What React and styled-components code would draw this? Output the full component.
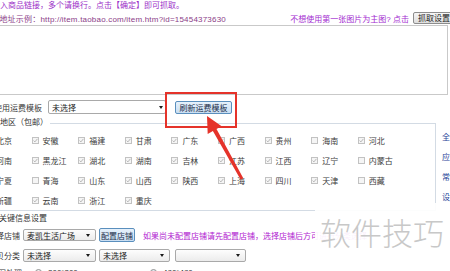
import React from 'react'
import styled, { createGlobalStyle } from 'styled-components'

const regions = [
  ['北京', 1], ['安徽', 1], ['福建', 1], ['甘肃', 1], ['广东', 1], ['广西', 1], ['贵州', 1], ['海南', 0], ['河北', 1],
  ['河南', 1], ['黑龙江', 1], ['湖北', 1], ['湖南', 1], ['吉林', 1], ['江苏', 1], ['江西', 1], ['辽宁', 1], ['内蒙古', 0],
  ['宁夏', 1], ['青海', 0], ['山东', 1], ['山西', 1], ['陕西', 1], ['上海', 1], ['四川', 1], ['天津', 1], ['西藏', 0],
  ['新疆', 1], ['云南', 1], ['浙江', 1], ['重庆', 1],
]

const links = ['全部选择', '应用到全部', '常用地区', '设置']

export default function App() {
  return (
    <>
      <GlobalStyle />
      <Page>
        <Sheet>
          <TopNote>请输入商品链接，多个请换行。点击【确定】即可抓取。</TopNote>
          <ExampleRow>
            <Example>宝贝地址示例：http://item.taobao.com/item.htm?id=15454373630</Example>
            <Hint>不想使用第一张图片为主图? 点击</Hint>
            <GrayButton>抓取设置</GrayButton>
          </ExampleRow>
          <UrlBox />

          <FormRow $top={5}>
            <Label $w={72} $gap={6}>使用运费模板</Label>
            <Select $w={118} $h={14} $arrow={2} $plain>未选择</Select>
            <BlueButton $w={57} $h={13} $ml={9}>刷新运费模板</BlueButton>
          </FormRow>

          <RegionRow>
            <Region>
              <Legend>指定地区（包邮）</Legend>
              <Grid>
                {regions.map(([name, on]) => (
                  <Item key={name}>
                    <Box>
                      {on ? (
                        <svg width="5" height="5" viewBox="0 0 5 5">
                          <path d="M0.6 2.6 L1.9 3.9 L4.4 0.9" stroke="#b0b0b0" strokeWidth="0.9" fill="none" />
                        </svg>
                      ) : null}
                    </Box>
                    {name}
                  </Item>
                ))}
              </Grid>
            </Region>
            <LinkCol>
              {links.map((l) => (
                <SideLink key={l}>{l}</SideLink>
              ))}
            </LinkCol>
          </RegionRow>

          <SectionTitle>关键信息设置</SectionTitle>

          <FormRow $top={4}>
            <Label $w={50} $gap={3}>选择店铺</Label>
            <Select $w={73} $h={12} $arrow={5}>麦凯生活广场</Select>
            <BlueButton $w={36} $h={14} $ml={3}>配置店铺</BlueButton>
            <StoreNote>如果尚未配置店铺请先配置店铺，选择店铺后方可进行分类选择</StoreNote>
          </FormRow>

          <FormRow $top={6}>
            <Label $w={50} $gap={3}>宝贝分类</Label>
            <Select $w={73} $h={13} $arrow={5}>未选择</Select>
            <Select $w={71} $h={13} $arrow={5} $ml={3}>未选择</Select>
            <Select $w={71} $h={13} $arrow={5} $ml={5}></Select>
          </FormRow>

          <FormRow $top={3}>
            <Label $w={52} $gap={13}>主图处理</Label>
            <RadioOption $w={115}>
              <Radio />200*200
            </RadioOption>
            <RadioOption $w={80}>
              <Radio $on />480*480
            </RadioOption>
          </FormRow>
        </Sheet>

        <Marks width="450" height="271" viewBox="0 0 450 271">
          <rect x="166" y="93" width="70" height="34" fill="none" stroke="#e5332a" strokeWidth="2" />
          <polygon
            points="207,116 221.7,126.3 216.5,129.1 243.3,178.3 240.7,179.7 212.9,131.1 207.7,133.9"
            fill="#e5332a"
          />
        </Marks>

        <Watermark>软件技巧</Watermark>
      </Page>
    </>
  )
}

const GlobalStyle = createGlobalStyle`
    html, body {
        margin: 0;
        padding: 0;
        background: #fff;
        overflow: hidden;
    }`
const Page = styled.div`
    position: relative;
    width: 450px;
    height: 271px;
    overflow: hidden;
    font-family: "Liberation Sans", "Noto Sans CJK SC", sans-serif;
    font-size: 8px;
    color: #3a3a3a;`
const Sheet = styled.div`
    margin-left: -30px;
    width: 540px;
    display: flex;
    flex-direction: column;`
const TopNote = styled.div`
    height: 11px;
    line-height: 11px;
    padding-left: 14px;
    color: #9b30c8;
    white-space: nowrap;`
const ExampleRow = styled.div`
    display: flex;
    align-items: center;
    width: 485px;
    height: 14px;
    white-space: nowrap;`
const Example = styled.span`
    padding-left: 13px;
    letter-spacing: 0.2px;
    color: #8b3d87;`
const Hint = styled.span`
    margin-left: auto;
    color: #a32ad0;`
const GrayButton = styled.span`
    margin-left: 4px;
    height: 12px;
    line-height: 11px;
    padding: 0 4px;
    box-sizing: border-box;
    border: 1px solid #8d8d8d;
    border-radius: 2px;
    background: linear-gradient(#f6f6f6, #dedede);
    color: #222;`
const UrlBox = styled.div`
    margin-left: 8px;
    width: 470px;
    height: 70px;
    box-sizing: border-box;
    border: 1px solid #c9c9c9;
    background: #fff;`
const FormRow = styled.div`
    display: flex;
    align-items: center;
    height: 14px;
    margin-top: ${(p) => p.$top}px;
    white-space: nowrap;`
const Label = styled.span`
    flex: none;
    width: ${(p) => p.$w}px;
    margin-right: ${(p) => p.$gap}px;
    text-align: right;
    overflow: hidden;`
const SelectBox = styled.span`
    flex: none;
    display: flex;
    align-items: center;
    width: ${(p) => p.$w}px;
    height: ${(p) => p.$h}px;
    margin-left: ${(p) => p.$ml || 0}px;
    padding-left: 3px;
    box-sizing: border-box;
    border: 1px solid #a9a9a9;
    border-radius: 2px;
    background: ${(p) => (p.$plain ? '#fff' : 'linear-gradient(#fdfdfd, #ececec)')};
    color: #222;`
const Arrow = styled.span`
    margin-left: auto;
    margin-right: ${(p) => p.$r}px;
    width: 0;
    height: 0;
    border-left: 2.5px solid transparent;
    border-right: 2.5px solid transparent;
    border-top: 3px solid #1a1a1a;`
function Select({ children, $arrow, ...rest }) {
  return (
    <SelectBox {...rest}>
      {children}
      <Arrow $r={$arrow} />
    </SelectBox>
  )
}
const BlueButton = styled.span`
    flex: none;
    width: ${(p) => p.$w}px;
    height: ${(p) => p.$h}px;
    margin-left: ${(p) => p.$ml}px;
    box-sizing: border-box;
    border: 1px solid #5a8fbd;
    border-radius: 2px;
    background: linear-gradient(#e6f1fb, #c9def2);
    color: #1d2f4a;
    display: flex;
    align-items: center;
    justify-content: center;`
const RegionRow = styled.div`
    display: flex;
    margin-top: 3px;`
const Region = styled.fieldset`
    flex: none;
    margin: 0;
    padding: 1px 0 0 14px;
    width: 466px;
    box-sizing: border-box;
    min-inline-size: auto;
    border: 1px solid #d3dbe4;`
const Legend = styled.legend`
    margin-left: -3px;
    padding: 0 2px;
    line-height: 12px;
    font-size: 8px;
    color: #333;`
const Grid = styled.div`
    display: grid;
    grid-template-columns: repeat(9, 46.6px);
    grid-auto-rows: 20px;`
const Item = styled.label`
    display: flex;
    align-items: center;
    white-space: nowrap;
    color: #3c3c3c;`
const Box = styled.span`
    flex: none;
    width: 7px;
    height: 7px;
    margin-right: 4px;
    box-sizing: border-box;
    border: 1px solid #c2c2c2;
    background: #f5f5f5;
    display: flex;
    align-items: center;
    justify-content: center;`
const LinkCol = styled.div`
    flex: none;
    display: flex;
    flex-direction: column;
    margin-left: 6px;
    padding-top: 11px;`
const SideLink = styled.span`
    line-height: 20px;
    color: #1f3f98;
    white-space: nowrap;`
const SectionTitle = styled.div`
    margin-top: 3px;
    padding-left: 29px;
    line-height: 10px;
    color: #333;`
const StoreNote = styled.span`
    margin-left: 8px;
    color: #b020d0;`
const RadioOption = styled.span`
    flex: none;
    display: flex;
    align-items: center;
    width: ${(p) => p.$w}px;
    color: #333;`
const Radio = styled.span`
    flex: none;
    width: 7px;
    height: 7px;
    margin-right: 6px;
    box-sizing: border-box;
    border-radius: 50%;
    border: 1px solid #8f9090;
    background: ${(p) => (p.$on ? 'radial-gradient(circle, #2b4a6e 0 1.5px, #dfe8f0 2px)' : 'linear-gradient(#eee, #fafafa)')};`
const Marks = styled.svg`
    position: absolute;
    left: 0;
    top: 0;
    pointer-events: none;`
const Watermark = styled.div`
    position: absolute;
    left: 315px;
    top: 203px;
    width: 135px;
    height: 68px;
    box-sizing: border-box;
    padding: 13px 0 0 5px;
    background: rgba(255, 255, 255, 0.93);
    font-family: "Noto Sans CJK SC", sans-serif;
    font-size: 31px;
    font-weight: 300;
    line-height: 31px;
    color: #c8c8c8;
    white-space: nowrap;`
